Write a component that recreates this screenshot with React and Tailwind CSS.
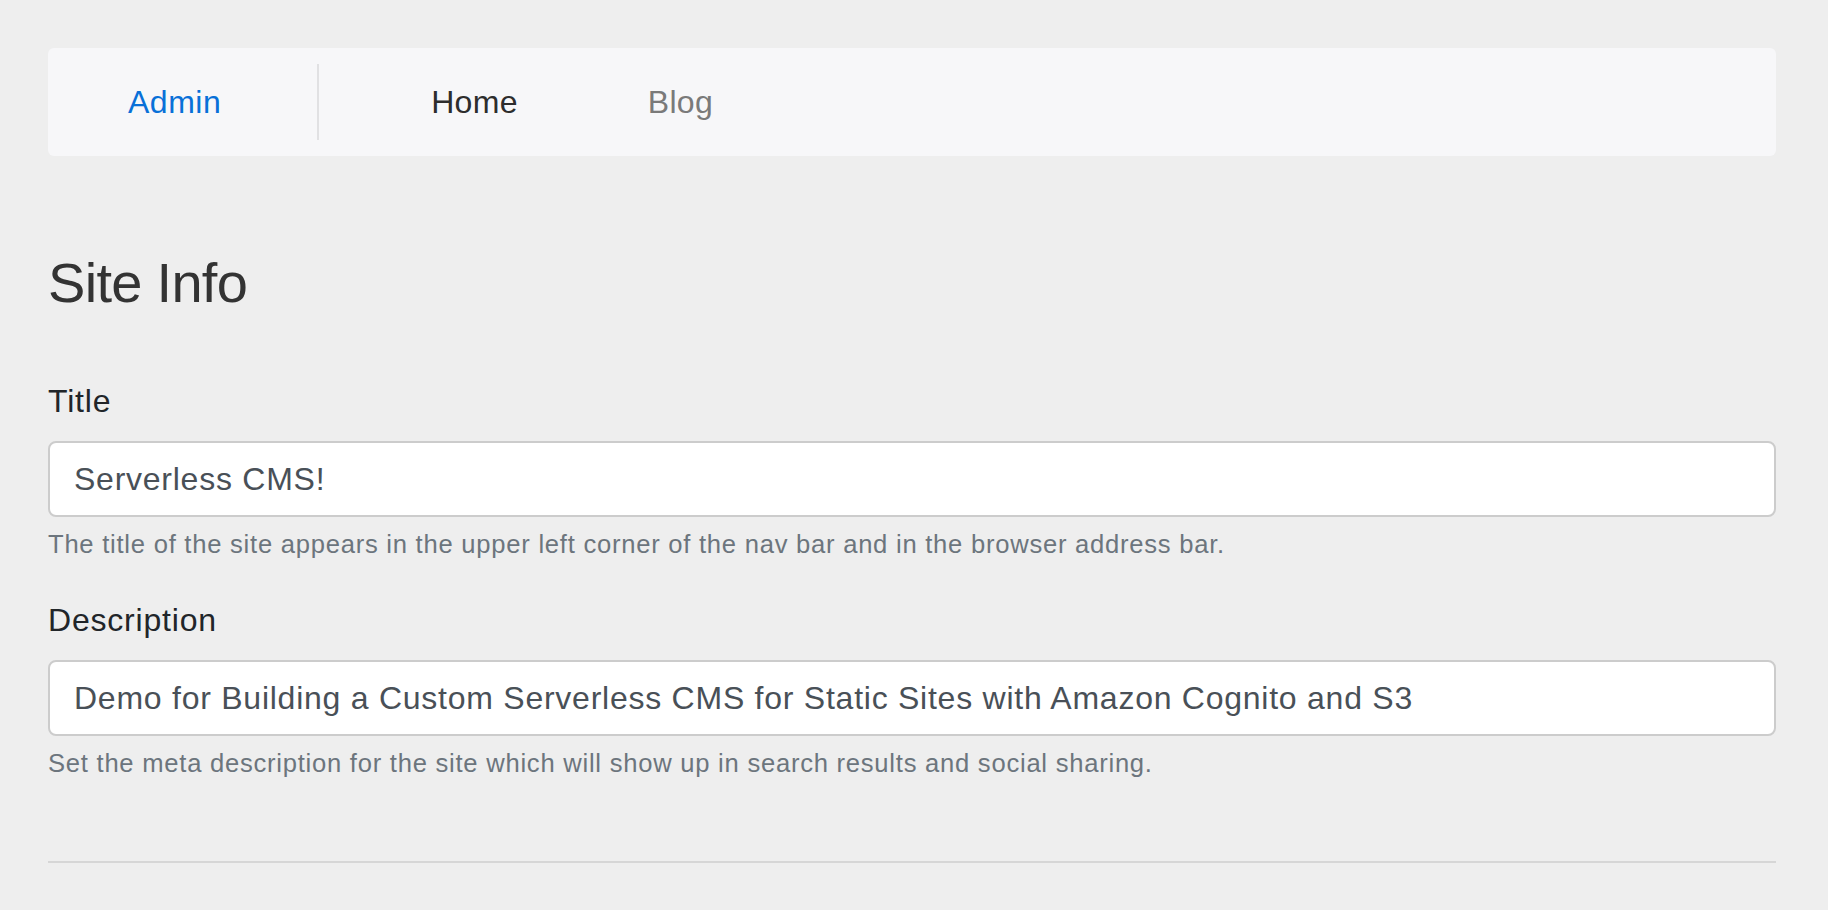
import React from "react";

const font = { fontFamily: '"Liberation Sans", Arial, Helvetica, sans-serif' };

function Field({ label, value, help, first }) {
  return (
    <div className={first ? "mt-[61px]" : "mt-[33px]"}>
      <label className="block text-[32px] leading-[48px] tracking-[0.8px] text-[#212529]">{label}</label>
      <input
        readOnly
        defaultValue={value}
        className="mt-[16px] block w-full h-[76px] rounded-[8px] border-2 border-[#cccccc] bg-white px-[24px] text-[32px] leading-[48px] tracking-[0.75px] text-[#495057] outline-none"
        style={font}
      />
      <p className="mt-[8px] text-[25.6px] leading-[38.4px] tracking-[0.75px] text-[#6c757d]">{help}</p>
    </div>
  );
}

export default function App() {
  return (
    <div className="min-h-[910px] w-full bg-[#eeeeee]" style={font}>
      <div className="pt-[48px] pl-[48px] w-[1776px]">
        <nav className="flex h-[108px] items-center rounded-[6px] bg-[#f7f7f9]">
          <a className="ml-[80px] text-[32px] leading-[48px] tracking-[0.5px] text-[#0870d8]">Admin</a>
          <div className="ml-[96px] h-[76px] w-[2px] bg-[#e1e1e3]" />
          <a className="ml-[112px] text-[32px] leading-[48px] tracking-[0.3px] text-[#2d2d2d]">Home</a>
          <a className="ml-[130px] text-[32px] leading-[48px] tracking-[0.3px] text-[#7a7a7a]">Blog</a>
        </nav>

        <h3 className="mt-[93px] text-[56px] leading-[67px] tracking-[-0.7px] text-[#333333]">Site Info</h3>

        <Field
          first
          label="Title"
          value="Serverless CMS!"
          help="The title of the site appears in the upper left corner of the nav bar and in the browser address bar."
        />
        <Field
          label="Description"
          value="Demo for Building a Custom Serverless CMS for Static Sites with Amazon Cognito and S3"
          help="Set the meta description for the site which will show up in search results and social sharing."
        />

        <div className="mt-[78px] h-[2px] w-full bg-[#d6d6d6]" />
      </div>
    </div>
  );
}
